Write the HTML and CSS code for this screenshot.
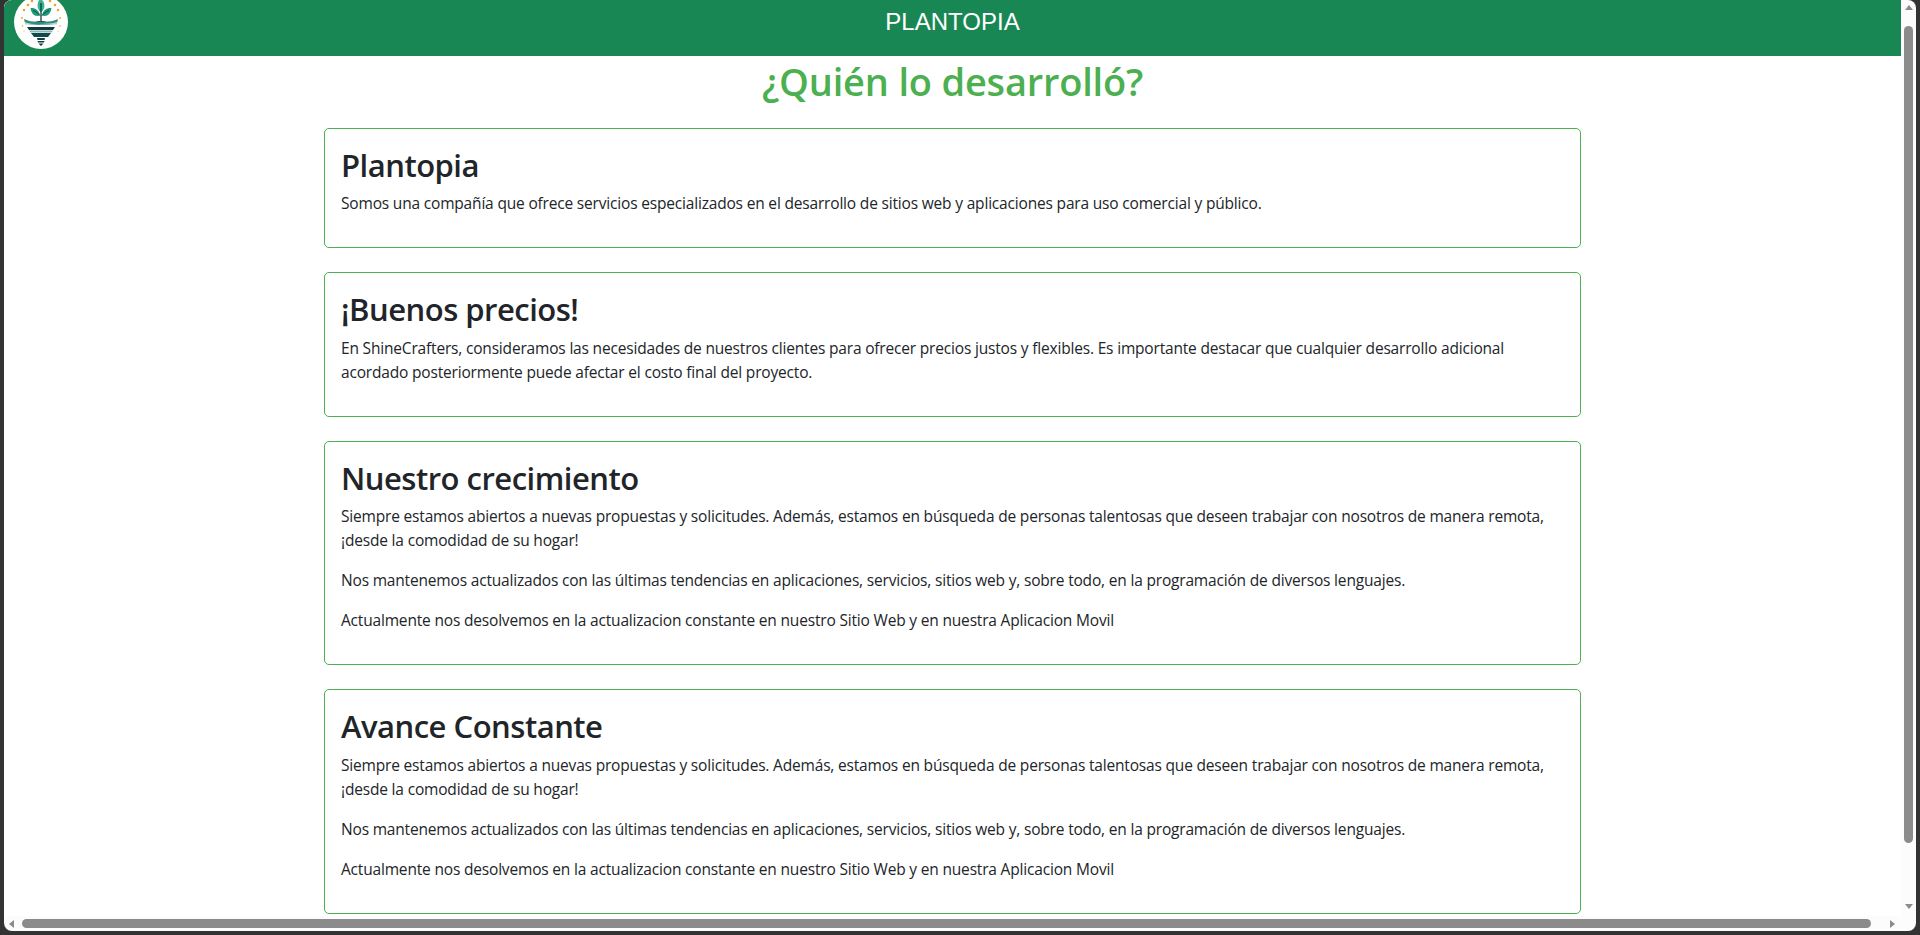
FILE: index.html
```html
<!DOCTYPE html>
<html lang="es">
<head>
<meta charset="utf-8">
<title>Plantopia</title>
<link rel="stylesheet" href="styles.css">
</head>
<body>
<div class="window">
  <div class="viewport">
    <header class="topbar">
      <svg class="logo" viewBox="0 0 54 54" aria-hidden="true">
        <circle cx="27" cy="22" r="27" fill="#fff"/>
        <g fill="#e9a21f"><circle cx="18" cy="1" r="1.3"/><circle cx="36" cy="1" r="1.3"/><circle cx="14" cy="5" r="1.300"/><circle cx="41" cy="5" r="1.300"/><circle cx="10" cy="10" r="1.200"/><circle cx="44" cy="10" r="1.200"/><circle cx="8" cy="18" r=".9"/><circle cx="46" cy="18" r=".9"/><circle cx="8.500" cy="26" r=".8"/><circle cx="46" cy="26" r=".8"/><circle cx="10" cy="31" r=".6"/><circle cx="44" cy="31" r=".6"/></g>
        <path d="M27-1c3 2.500 3.800 5.500 3.200 8.500-.5 2.300-1.800 4-3.200 4.500-1.400-.5-2.700-2.200-3.200-4.500C23.200 4.500 24-.5 27-1z" fill="#35b48e"/>
        <path d="M16.500 8c4.500-.5 8.500 2 9.500 7.500-5 1.500-8.500-1-9.500-7.500zM37.500 8c-4.500-.5-8.500 2-9.500 7.500 5 1.500 8.500-1 9.500-7.500z" fill="#1d9a77"/>
        <path d="M19 10.500c2.500 1 5 2.500 7 5M35 10.500c-2.500 1-5 2.500-7 5" stroke="#0f4f4a" stroke-width="1" fill="none"/>
        <path d="M27 3v19" stroke="#123c40" stroke-width="1.300" fill="none"/>
        <path d="M21 22c2-1.500 10-1.500 12 0z" fill="#123c40"/>
        <path d="M10 19c6 3 12 3 17 2.500 5 .5 11 .5 17-2.500l-1 4c-6 2-11 2-16 2s-10 0-16-2z" fill="#2d8c7a"/>
        <path d="M11 22c5 2 11 2.500 16 2s11 0 16-2v2.500H11z" fill="#b7cfcb"/>
        <path d="M13 27h28l-2 3H15z" fill="#0f3d42"/>
        <path d="M15 30.500h24l-1.500 2h-21z" fill="#94b3b0"/>
        <path d="M17 33h20l-3 4H20z" fill="#0f4a4c"/>
        <path d="M23 38h8l-.5 2h-7zM23.500 41h7l-.5 1.500h-6zM24.500 43.500h5L27 46z" fill="#123c40"/>
      </svg>
      <span class="brand">PLANTOPIA</span>
    </header>
    <main class="content">
      <h1 class="page-title">¿Quién lo desarrolló?</h1>
      <section class="card">
        <h2>Plantopia</h2>
        <p>Somos una compañía que ofrece servicios especializados en el desarrollo de sitios web y aplicaciones para uso comercial y público.</p>
      </section>
      <section class="card">
        <h2>¡Buenos precios!</h2>
        <p>En ShineCrafters, consideramos las necesidades de nuestros clientes para ofrecer precios justos y flexibles. Es importante destacar que cualquier desarrollo adicional acordado posteriormente puede afectar el costo final del proyecto.</p>
      </section>
      <section class="card">
        <h2>Nuestro crecimiento</h2>
        <p>Siempre estamos abiertos a nuevas propuestas y solicitudes. Además, estamos en búsqueda de personas talentosas que deseen trabajar con nosotros de manera remota, ¡desde la comodidad de su hogar!</p>
        <p>Nos mantenemos actualizados con las últimas tendencias en aplicaciones, servicios, sitios web y, sobre todo, en la programación de diversos lenguajes.</p>
        <p>Actualmente nos desolvemos en la actualizacion constante en nuestro Sitio Web y en nuestra Aplicacion Movil</p>
      </section>
      <section class="card">
        <h2>Avance Constante</h2>
        <p>Siempre estamos abiertos a nuevas propuestas y solicitudes. Además, estamos en búsqueda de personas talentosas que deseen trabajar con nosotros de manera remota, ¡desde la comodidad de su hogar!</p>
        <p>Nos mantenemos actualizados con las últimas tendencias en aplicaciones, servicios, sitios web y, sobre todo, en la programación de diversos lenguajes.</p>
        <p>Actualmente nos desolvemos en la actualizacion constante en nuestro Sitio Web y en nuestra Aplicacion Movil</p>
      </section>
    </main>
  </div>
  <div class="vscroll">
    <span class="arrow up"></span>
    <span class="vthumb"></span>
    <span class="arrow down"></span>
  </div>
  <div class="hscroll">
    <span class="arrow left"></span>
    <span class="hthumb"></span>
    <span class="arrow right"></span>
  </div>
</div>
</body>
</html>
```
FILE: styles.css
```css
* { box-sizing: border-box; }
html, body { margin: 0; height: 100%; overflow: hidden; }
body { background: #333; padding: 0 4px 4px; font-family: "Open Sans", "Noto Sans", sans-serif; color: #212529; }
.window {
  height: 100%;
  display: grid;
  grid-template-columns: 1fr 15px;
  grid-template-rows: 1fr 15px;
  background: #fcfcfc;
  border-radius: 8px;
  overflow: hidden;
}
.viewport { overflow: hidden; background: #fff; min-height: 0; min-width: 0; }
.topbar {
  height: 56px;
  padding-bottom: 12px;
  background: #198754;
  display: flex;
  align-items: center;
  justify-content: center;
  position: relative;
}
.logo { position: absolute; left: 10px; top: 0; width: 54px; height: 54px; }
.brand { color: #fff; font: 24px "Liberation Sans", Arial, sans-serif; }
.content { display: flex; flex-direction: column; align-items: center; }
.page-title { margin: 0 0 24px; padding-top: 1px; height: 48px; font-size: 38px; font-weight: 600; line-height: 48px; letter-spacing: -.2px; color: #4caf50; }
.card {
  width: 1257px;
  border: 1px solid #4caf50;
  border-radius: 5px;
  padding: 16px;
  margin-bottom: 24px;
}
.card h2 { margin: 0 0 7px; padding-top: 1px; font-size: 31px; font-weight: 600; line-height: 38.4px; letter-spacing: -.5px; }
.card p { margin: 0 0 16px; font-size: 15.500px; line-height: 24px; letter-spacing: -.18px; }
.vscroll { display: flex; flex-direction: column; align-items: center; padding: 5px 0 7px; min-height: 0; }
.vthumb { width: 9px; flex: 1; margin: 16px 0 61px; background: #8b8b8b; border-radius: 5px; }
.hscroll { grid-column: 1; display: flex; align-items: center; padding: 0 6px 0 5px; }
.hthumb { height: 9px; flex: 1; margin: 0 19px 0 8px; background: #8b8b8b; border-radius: 5px; }
.arrow { width: 0; height: 0; border-style: solid; border-color: transparent; flex: none; }
.arrow.up { border-width: 0 4.500px 5px; border-bottom-color: #8b8b8b; }
.arrow.down { border-width: 5px 4.500px 0; border-top-color: #8b8b8b; }
.arrow.left { border-width: 4.500px 5px 4.500px 0; border-right-color: #8b8b8b; }
.arrow.right { border-width: 4.500px 0 4.500px 5px; border-left-color: #8b8b8b; }
```
